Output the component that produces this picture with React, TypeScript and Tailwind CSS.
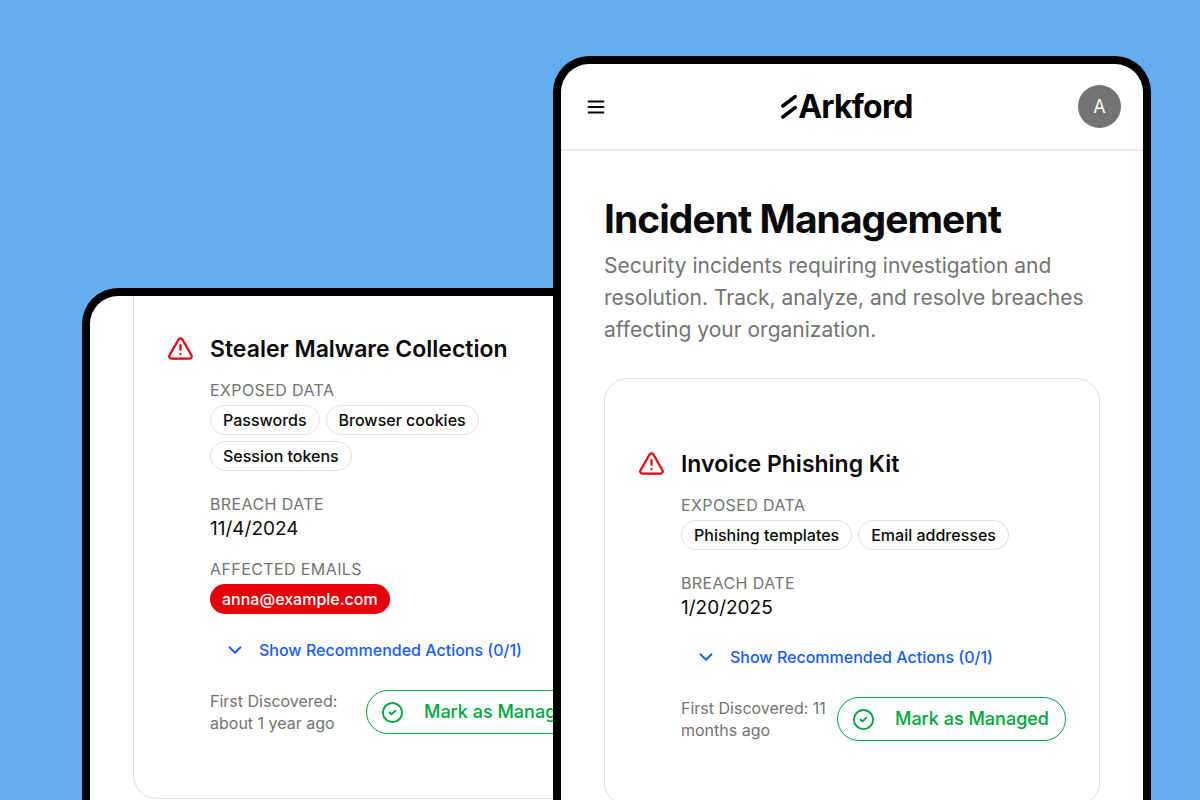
import type { ReactNode } from 'react';
import { ChevronDown, CircleCheck, TriangleAlert } from 'lucide-react';

type Incident = {
  title: string;
  exposedData: string[];
  breachDate: string;
  affectedEmails: string[];
  discovered: string;
};

const malwareIncident: Incident = {
  title: 'Stealer Malware Collection',
  exposedData: ['Passwords', 'Browser cookies', 'Session tokens'],
  breachDate: '11/4/2024',
  affectedEmails: ['anna@example.com'],
  discovered: 'about 1 year ago',
};

const phishingIncident: Incident = {
  title: 'Invoice Phishing Kit',
  exposedData: ['Phishing templates', 'Email addresses'],
  breachDate: '1/20/2025',
  affectedEmails: [],
  discovered: '11 months ago',
};

function Label({ children }: { children: ReactNode }) {
  return (
    <h3 className="text-base leading-[22px] tracking-wide text-[#737373] uppercase">
      {children}
    </h3>
  );
}

function IncidentDetails({ incident }: { incident: Incident }) {
  return (
    <article className="flex items-start gap-4">
      <TriangleAlert className="mt-0.5 size-[27px] shrink-0 text-[#e7000b]" />
      <div className="min-w-0 flex-1">
        <h2 className="text-[23px] leading-8 font-semibold whitespace-nowrap">
          {incident.title}
        </h2>

        <div className="mt-3.5">
          <Label>Exposed data</Label>
          <ul className="mt-1 flex flex-wrap gap-1.5">
            {incident.exposedData.map((item) => (
              <li
                key={item}
                className="rounded-full border border-[#e0e0e0] px-3 py-[3px] text-base leading-[22px] font-medium"
              >
                {item}
              </li>
            ))}
          </ul>
        </div>

        <div className="mt-[22px]">
          <Label>Breach date</Label>
          <p className="text-[19px] leading-[27px]">{incident.breachDate}</p>
        </div>

        {incident.affectedEmails.length > 0 && (
          <div className="mt-4">
            <Label>Affected emails</Label>
            <ul className="mt-1 flex flex-wrap gap-1.5">
              {incident.affectedEmails.map((email) => (
                <li
                  key={email}
                  className="rounded-full bg-[#e7000b] px-3 py-1 text-base leading-[22px] font-medium text-white"
                >
                  {email}
                </li>
              ))}
            </ul>
          </div>
        )}

        <button
          type="button"
          className="mt-3.5 flex h-[43px] items-center gap-[13px] px-3.5 text-base font-medium whitespace-nowrap text-[#155dfc]"
        >
          <ChevronDown className="size-[22px]" />
          Show Recommended Actions (0/1)
        </button>

        <div className="mt-[19px] flex items-center justify-between">
          <p className="text-base leading-[22px] text-[#737373]">
            First Discovered: {incident.discovered}
          </p>
          <button
            type="button"
            className="flex h-11 shrink-0 items-center gap-5 rounded-full border border-[#00a63e] pr-4 pl-3.5 text-lg font-medium whitespace-nowrap text-[#00a63e] shadow-xs"
          >
            <CircleCheck className="size-[23px]" />
            Mark as Managed
          </button>
        </div>
      </div>
    </article>
  );
}

function Logo() {
  return (
    <a href="#" className="flex items-center text-black">
      <svg viewBox="0 0 18 26" className="h-[26px] w-[18px]" fill="none">
        <path
          d="M2.8 12 15.2 2.6M2.8 23 15.2 13.6"
          stroke="currentColor"
          strokeWidth="3.6"
          strokeLinecap="round"
        />
      </svg>
      <span className="text-[32px] leading-10 font-bold tracking-tight">Arkford</span>
    </a>
  );
}

function Header() {
  return (
    <header className="flex h-[87px] items-center justify-between border-b-2 border-[#ebebeb] pr-[22px] pl-4">
      <button
        type="button"
        aria-label="Open menu"
        className="flex size-[38px] items-center justify-center"
      >
        <svg viewBox="0 0 24 24" className="size-[22px]" fill="none">
          <path d="M3 6h18M3 12h18M3 18h18" stroke="currentColor" strokeWidth="2" />
        </svg>
      </button>
      <Logo />
      <button
        type="button"
        className="flex size-[43px] items-center justify-center rounded-full bg-[#737373] text-lg text-white"
      >
        A
      </button>
    </header>
  );
}

export default function App() {
  return (
    <div className="flex h-screen overflow-hidden bg-[#63adf1] pr-[49px] pl-[82px] font-['Inter',sans-serif] text-[#0a0a0a] antialiased">
      <section className="mt-72 min-w-0 flex-1 overflow-hidden rounded-t-[36px] border-8 border-b-0 border-black bg-white">
        <div className="px-[43px]">
          <div className="rounded-b-3xl border border-t-0 border-[#e0e0e0] px-[33px] pt-[37px] pb-16">
            <IncidentDetails incident={malwareIncident} />
          </div>
        </div>
      </section>

      {/* front screen covers the right edge of the one behind it */}
      <section className="relative mt-14 -ml-[127px] min-w-0 flex-1 overflow-hidden rounded-t-[36px] border-8 border-b-0 border-black bg-white">
        <Header />
        <main className="px-[43px] pt-11">
          <h1 className="text-[39px] leading-[48px] font-bold tracking-tight">
            Incident Management
          </h1>
          <p className="mt-[7px] text-[21px] leading-8 text-[#737373]">
            Security incidents requiring investigation and resolution. Track, analyze, and
            resolve breaches affecting your organization.
          </p>
          <div className="mt-8 rounded-3xl border border-[#e0e0e0] px-[33px] pt-[69px] pb-16">
            <IncidentDetails incident={phishingIncident} />
          </div>
        </main>
      </section>
    </div>
  );
}
